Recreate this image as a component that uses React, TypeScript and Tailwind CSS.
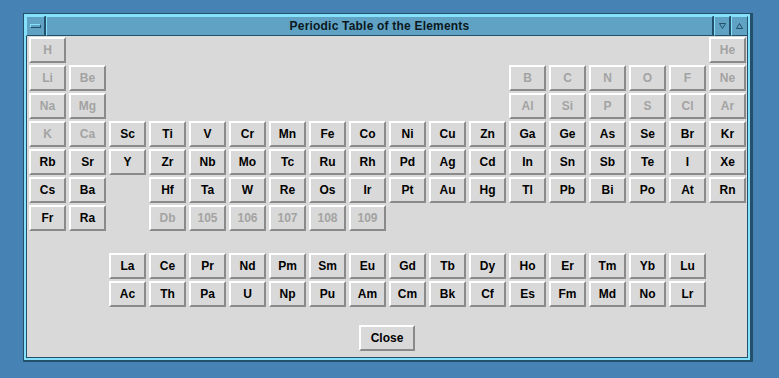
import React from "react";

const rows: string[][] = [
  ["~H", "", "", "", "", "", "", "", "", "", "", "", "", "", "", "", "", "~He"],
  ["~Li", "~Be", "", "", "", "", "", "", "", "", "", "", "~B", "~C", "~N", "~O", "~F", "~Ne"],
  ["~Na", "~Mg", "", "", "", "", "", "", "", "", "", "", "~Al", "~Si", "~P", "~S", "~Cl", "~Ar"],
  ["~K", "~Ca", "Sc", "Ti", "V", "Cr", "Mn", "Fe", "Co", "Ni", "Cu", "Zn", "Ga", "Ge", "As", "Se", "Br", "Kr"],
  ["Rb", "Sr", "Y", "Zr", "Nb", "Mo", "Tc", "Ru", "Rh", "Pd", "Ag", "Cd", "In", "Sn", "Sb", "Te", "I", "Xe"],
  ["Cs", "Ba", "", "Hf", "Ta", "W", "Re", "Os", "Ir", "Pt", "Au", "Hg", "Tl", "Pb", "Bi", "Po", "At", "Rn"],
  ["Fr", "Ra", "", "~Db", "~105", "~106", "~107", "~108", "~109", "", "", "", "", "", "", "", "", ""],
];

const lanthanides = ["La", "Ce", "Pr", "Nd", "Pm", "Sm", "Eu", "Gd", "Tb", "Dy", "Ho", "Er", "Tm", "Yb", "Lu"];
const actinides = ["Ac", "Th", "Pa", "U", "Np", "Pu", "Am", "Cm", "Bk", "Cf", "Es", "Fm", "Md", "No", "Lr"];

function ElementButton({ label }: { label: string }) {
  const disabled = label.startsWith("~");
  const text = disabled ? label.slice(1) : label;
  return (
    <div
      className={
        "w-[37px] h-[26px] flex items-center justify-center border-2 border-t-white border-l-white border-r-[#8a8a8a] border-b-[#8a8a8a] bg-[#d9d9d9] text-[12px] font-bold leading-none " +
        (disabled ? "text-[#a3a3a3]" : "text-black")
      }
    >
      {text}
    </div>
  );
}

function TitleSeg({ children, className }: { children?: React.ReactNode; className?: string }) {
  return (
    <div
      className={
        "h-full flex items-center justify-center border border-t-[#84e0fb] border-l-[#84e0fb] border-r-[#23506b] border-b-[#23506b] bg-[#5fa2c4] " +
        (className ?? "")
      }
    >
      {children}
    </div>
  );
}

export default function App() {
  return (
    <div className="w-[779px] h-[378px] bg-[#4682b4] pt-[13px] pl-[23px] font-['Liberation_Sans',Arial,sans-serif]">
      <div className="w-[730px] border-t border-l border-r-[3px] border-b-2 border-[#23506b]">
        <div className="border-2 border-[#84e0fb] flex flex-col">
          {/* title bar */}
          <div className="h-[20px] flex gap-px bg-[#23506b]">
            <TitleSeg className="w-[19px]">
              <div className="w-[11px] h-[4px] border border-t-[#84e0fb] border-l-[#84e0fb] border-r-[#23506b] border-b-[#23506b]" />
            </TitleSeg>
            <TitleSeg className="flex-1">
              <span className="text-[12px] font-bold text-[#0b1820] tracking-[0.2px]">
                Periodic Table of the Elements
              </span>
            </TitleSeg>
            <TitleSeg className="w-[16px]">
              <svg width="9" height="8" viewBox="0 0 9 8">
                <path d="M1.5 1.5 L7.5 1.5 L4.5 6.5 Z" fill="none" stroke="#23506b" strokeWidth="1" />
              </svg>
            </TitleSeg>
            <TitleSeg className="w-[17px]">
              <svg width="9" height="8" viewBox="0 0 9 8">
                <path d="M4.5 1.5 L7.5 6.5 L1.5 6.5 Z" fill="none" stroke="#23506b" strokeWidth="1" />
              </svg>
            </TitleSeg>
          </div>
          {/* content */}
          <div className="h-[322px] border border-t-0 border-[#23506b] bg-[#d9d9d9] pl-[2px] pt-px flex flex-col">
            <div className="grid grid-cols-[repeat(18,37px)] gap-x-[3px] gap-y-[2px] auto-rows-[26px]">
              {rows.flatMap((row, r) =>
                row.map((el, c) => (el ? <ElementButton key={r + "-" + c} label={el} /> : <div key={r + "-" + c} />))
              )}
            </div>
            <div className="mt-[22px] ml-[80px] grid grid-cols-[repeat(15,37px)] gap-x-[3px] gap-y-[2px] auto-rows-[26px]">
              {lanthanides.map((el) => (
                <ElementButton key={el} label={el} />
              ))}
              {actinides.map((el) => (
                <ElementButton key={el} label={el} />
              ))}
            </div>
            <div className="mt-[18px] flex justify-center pr-[2px]">
              <div className="w-[56px] h-[26px] flex items-center justify-center border-2 border-t-white border-l-white border-r-[#8a8a8a] border-b-[#8a8a8a] text-[12px] font-bold text-black">
                Close
              </div>
            </div>
          </div>
        </div>
      </div>
    </div>
  );
}
